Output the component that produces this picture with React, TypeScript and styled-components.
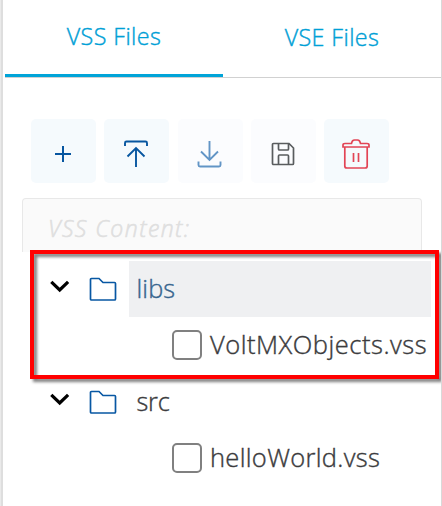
import React from "react";
import styled, { createGlobalStyle } from "styled-components";

const GlobalStyle = createGlobalStyle`
  *, *::before, *::after { box-sizing: border-box; }
  html, body { margin: 0; background: #fff; overflow: hidden; }
  body { font-family: "Open Sans", "Noto Sans", sans-serif; }
`;

const Panel = styled.main`
  position: relative;
  width: 442px;
  height: 506px;
  overflow: hidden;
  background: #fff;
  border-right: 1px solid #d9d9d9;

  &::before {
    content: "";
    position: absolute;
    inset: 0 auto 0 0;
    width: 3px;
    background: linear-gradient(90deg, #eaeaea 0 1px, #dedede 1px 3px);
  }
`;

const Tabs = styled.nav`
  display: flex;
  height: 78px;
  margin-left: 5px;
  border-bottom: 1px solid #d1d1d1;
`;

const Tab = styled.button<{ $active?: boolean }>`
  display: flex;
  justify-content: center;
  width: 218px;
  height: 77px;
  padding: ${(p) => (p.$active ? "19px 0 0 0" : "20px 0 0 0")};
  border: 0;
  border-bottom: ${(p) => (p.$active ? "3px solid #00a4d8" : "0")};
  background: none;
  color: #00a0d6;
`;

const Text = styled.span<{ $size: number; $spacing?: number; $italic?: boolean }>`
  display: inline-block;
  font-family: "Open Sans", "Noto Sans", sans-serif;
  font-size: ${(p) => p.$size}px;
  font-style: ${(p) => (p.$italic ? "italic" : "normal")};
  font-weight: 300;
  -webkit-text-stroke: ${(p) => (p.$italic ? 0.6 : 0.4)}px currentColor;
  letter-spacing: ${(p) => p.$spacing ?? 0}px;
  line-height: 34px;
  white-space: nowrap;
`;

const Toolbar = styled.div`
  display: grid;
  grid-template-columns: 65px 65px 65px 65px 65px;
  column-gap: 8.25px;
  margin: 41px 0 0 31px;
`;

const ToolButton = styled.button<{ $faded?: boolean }>`
  display: flex;
  align-items: center;
  justify-content: center;
  height: 64px;
  padding: 6px 1px 0 0;
  border: 0;
  border-radius: 5px;
  background: ${(p) => (p.$faded ? "#fbfcfe" : "#f5fafd")};
`;

const Icon = styled.svg`
  display: block;
  flex: none;
  fill: none;
`;

const ContentHeader = styled.div`
  width: 400px;
  height: 54px;
  margin: 15px 0 0 22px;
  padding: 12px 0 0 25px;
  border: 1px solid #e8e8e8;
  border-bottom: 0;
  border-radius: 4px 4px 0 0;
  background: #fafafa;
  color: #dfdfdf;
`;

const Tree = styled.div`
  padding: 9px 10px 0 50px;
`;

const FolderRow = styled.div`
  display: flex;
  height: 56px;
`;

const Chevron = styled(Icon)`
  margin-top: 18.5px;
`;

const Folder = styled(Icon)`
  margin: 16px 0 0 19px;
`;

const FolderName = styled.div<{ $selected?: boolean }>`
  flex: 1;
  margin-left: 12px;
  padding: 10px 0 0 7.5px;
  background: ${(p) => (p.$selected ? "#eff0f2" : "transparent")};
  color: ${(p) => (p.$selected ? "#37658e" : "#3b3b3d")};
`;

const FileRow = styled.label`
  display: flex;
  height: 57px;
  padding: 10px 0 0 122px;
  color: #3b3b3d;
`;

const Checkbox = styled.input`
  appearance: none;
  flex: none;
  width: 30px;
  height: 30px;
  margin: 3px 8px 0 0;
  border: 2px solid #808080;
  border-radius: 5px;
  background: #fff;
`;

const Highlight = styled.div`
  position: absolute;
  left: 30px;
  top: 250px;
  width: 409px;
  height: 129px;
  border: 4px solid #f00;
  filter: drop-shadow(3px 3px 1.5px rgba(0, 0, 0, 0.5));
  pointer-events: none;
`;

const AddIcon = () => (
  <Icon width="18" height="18" viewBox="0 0 18 18">
    <path d="M9 1v16M1 9h16" stroke="#0756a0" strokeWidth="2" />
  </Icon>
);

const UploadIcon = () => (
  <Icon width="26" height="30" viewBox="0 0 26 30">
    <path d="M2 7V4Q2 2.500 3.500 2.500h19Q24 2.500 24 4V7M13 28V9M4.500 17.500 13 9l8.500 8.500" stroke="#0756a0" strokeWidth="1.900" />
  </Icon>
);

const DownloadIcon = () => (
  <Icon width="26" height="30" viewBox="0.500 0 26 30">
    <path d="M2 22.500v3.500Q2 27.500 3.500 27.500h19q1.500 0 1.500-1.500v-3.500M13 2v19M4.500 12.500 13 21l8.500-8.500" stroke="#6295c6" strokeWidth="1.900" />
  </Icon>
);

const SaveIcon = () => (
  <Icon width="24" height="24" viewBox="0 0 24 24">
    <path d="M2.500 1.500h15.500l4.500 4.500v15.500q0 1-1 1h-19q-1 0-1-1v-19q0-1 1-1ZM7.500 2v5q0 1 1 1h8q1 0 1-1V2M7.500 22v-8q0-1 1-1h8q1 0 1 1v8" stroke="#595c5e" strokeWidth="1.700" />
  </Icon>
);

const TrashIcon = () => (
  <Icon width="28" height="30" viewBox="0 0 28 30">
    <path d="M1 8V6q0-1.500 2-1.500h6.500Q10 1 12.500 1h3q2.500 0 3 3.500H25q2 0 2 1.500v2ZM2.800 8h22.400v19q0 2-2 2H4.800q-2 0-2-2ZM11.500 14v9M16.500 14v9" stroke="#e24455" strokeWidth="1.700" />
  </Icon>
);

const FolderHeader = ({ name, selected }: { name: string; selected?: boolean }) => (
  <FolderRow>
    <Chevron width="20" height="14" viewBox="0 0 20 14">
      <path d="m1.300 1.800 8.400 8.200 8.400-8.200" stroke="#000" strokeWidth="3.200" />
    </Chevron>
    <Folder width="28" height="25" viewBox="0 0 28 25">
      <path d="M2.500 1.500h7.500l4 4h11.500q1 0 1 1v15.500q0 1-1 1H2.500q-1 0-1-1v-19.500q0-1 1-1Z" stroke="#0757a3" strokeWidth="1.700" />
    </Folder>
    <FolderName $selected={selected}><Text $size={25.3} $spacing={selected ? 0.1 : -0.2}>{name}</Text></FolderName>
  </FolderRow>
);

const FileItem = ({ name, spacing }: { name: string; spacing?: number }) => (
  <FileRow>
    <Checkbox type="checkbox" />
    <Text $size={25.5} $spacing={spacing}>{name}</Text>
  </FileRow>
);

export default function App() {
  return (
    <>
      <GlobalStyle />
      <Panel>
        <Tabs>
          <Tab $active><Text $size={23.3} $spacing={0.42}>VSS Files</Text></Tab>
          <Tab><Text $size={23.3} $spacing={0.42}>VSE Files</Text></Tab>
        </Tabs>
        <Toolbar>
          <ToolButton aria-label="Add"><AddIcon /></ToolButton>
          <ToolButton aria-label="Upload"><UploadIcon /></ToolButton>
          <ToolButton $faded aria-label="Download"><DownloadIcon /></ToolButton>
          <ToolButton $faded aria-label="Save"><SaveIcon /></ToolButton>
          <ToolButton aria-label="Delete"><TrashIcon /></ToolButton>
        </Toolbar>
        <ContentHeader><Text $size={23} $spacing={1.45} $italic>VSS Content:</Text></ContentHeader>
        <Tree>
          <FolderHeader name="libs" selected />
          <FileItem name="VoltMXObjects.vss" spacing={0.52} />
          <FolderHeader name="src" />
          <FileItem name="helloWorld.vss" spacing={0.32} />
        </Tree>
        <Highlight />
      </Panel>
    </>
  );
}
